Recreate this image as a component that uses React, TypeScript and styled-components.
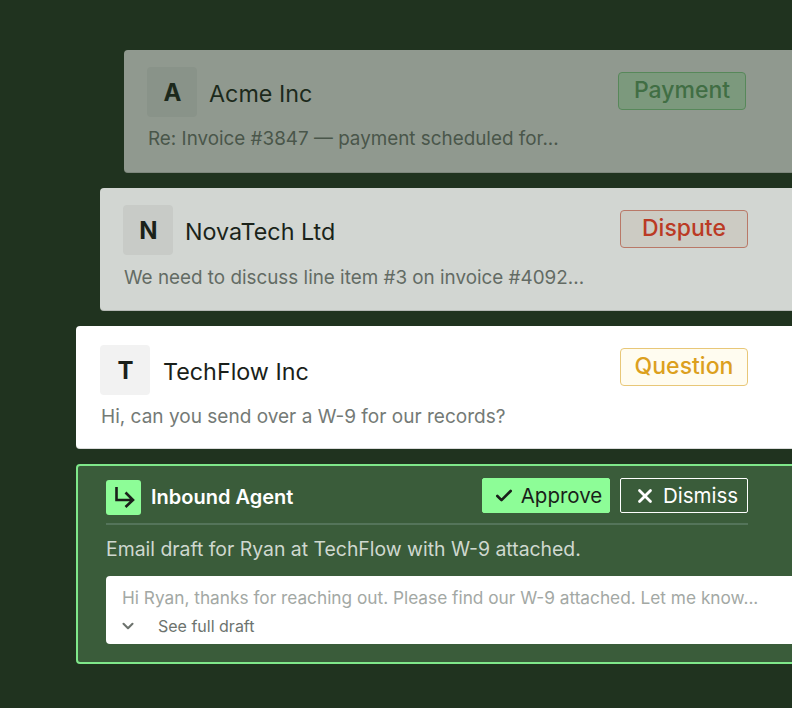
import React from 'react';
import styled, { createGlobalStyle } from 'styled-components';
import { Check, ChevronDown, X } from 'lucide-react';

const GlobalStyle = createGlobalStyle`
	html, body {
		margin: 0;
		background: #20331f;
		font-family: 'Inter', 'Liberation Sans', sans-serif;
	}
`;

const Stage = styled.div`
	width: 792px;
	height: 708px;
	overflow: hidden;
	box-sizing: border-box;
	padding-top: 50px;
	display: flex;
	flex-direction: column;
	gap: 15px;
	background: #20331f;
`;

const Card = styled.div<{ $indent: number; $fade: number; $top: number; $left: number }>`
	box-sizing: border-box;
	flex: none;
	width: 760px;
	height: 123px;
	margin-left: ${(p) => p.$indent}px;
	padding: ${(p) => p.$top}px 0 0 ${(p) => p.$left}px;
	background: #fff;
	border-radius: 4px;
	opacity: ${(p) => p.$fade};
	box-shadow: inset 0 -1px 0 rgba(0, 0, 0, 0.14);
`;

const CardHeader = styled.div<{ $width: number }>`
	display: flex;
	align-items: flex-start;
	width: ${(p) => p.$width}px;
`;

const Avatar = styled.div`
	box-sizing: border-box;
	flex: none;
	width: 50px;
	height: 50px;
	padding: 1px 0 0 1px;
	display: flex;
	align-items: center;
	justify-content: center;
	border-radius: 4px;
	background: #f2f2f2;
	color: #1a1f1a;
	font-size: 24px;
	font-weight: 700;
`;

const Company = styled.div<{ $gap: number }>`
	flex: 1;
	margin-left: ${(p) => p.$gap}px;
	line-height: 53px;
	font-size: 23.3px;
	color: #1a1f1a;
`;

const Tag = styled.div<{ $bg: string; $line: string; $ink: string; $offset: number }>`
	box-sizing: border-box;
	width: 128px;
	height: 38px;
	margin-top: ${(p) => p.$offset}px;
	padding-bottom: 2px;
	display: flex;
	align-items: center;
	justify-content: center;
	border: 1px solid ${(p) => p.$line};
	border-radius: 4px;
	background: ${(p) => p.$bg};
	color: ${(p) => p.$ink};
	font-size: 23px;
	font-weight: 500;
`;

const Message = styled.div<{ $gap: number; $size: number }>`
	margin: ${(p) => p.$gap}px 0 0 1px;
	line-height: 24px;
	font-size: ${(p) => p.$size}px;
	color: #747a76;
	white-space: nowrap;
`;

const AgentCard = styled.div`
	box-sizing: border-box;
	flex: none;
	width: 760px;
	height: 200px;
	margin-left: 76px;
	padding: 12px 0 0 28px;
	background: #3a5c3a;
	border: 2px solid #7fe88a;
	border-radius: 4px;
`;

const AgentHeader = styled.div`
	box-sizing: border-box;
	display: flex;
	align-items: center;
	width: 642px;
	height: 47px;
	padding-bottom: 10px;
	border-bottom: 2px solid #54745a;
`;

const AgentIcon = styled.div`
	flex: none;
	width: 35px;
	height: 35px;
	margin-top: 4px;
	display: flex;
	align-items: center;
	justify-content: center;
	border-radius: 3px;
	background: #8dfd97;
`;

const AgentName = styled.div`
	flex: 1;
	margin: 2px 0 0 10px;
	font-size: 20px;
	font-weight: 600;
	color: #fff;
`;

const ActionButton = styled.button<{ $primary?: boolean }>`
	box-sizing: border-box;
	width: 128px;
	height: 35px;
	margin-left: 10px;
	padding: 0 0 0 4px;
	display: flex;
	align-items: center;
	justify-content: center;
	gap: 7px;
	border: 1px solid ${(p) => (p.$primary ? '#8dfd97' : '#fff')};
	border-radius: 2px;
	background: ${(p) => (p.$primary ? '#8dfd97' : 'transparent')};
	color: ${(p) => (p.$primary ? '#1a1f1a' : '#fff')};
	font-family: inherit;
	font-size: 20.5px;
`;

const AgentNote = styled.div`
	margin-top: 12px;
	line-height: 24px;
	font-size: 19.4px;
	color: #cfd8cf;
	white-space: nowrap;
`;

const Draft = styled.div`
	box-sizing: border-box;
	margin-top: 15px;
	width: 720px;
	height: 68px;
	padding: 11px 16px;
	background: #fff;
	border-radius: 4px;
`;

const DraftText = styled.div`
	line-height: 22px;
	font-size: 17.25px;
	color: #a3a8a4;
	white-space: nowrap;
`;

const DraftToggle = styled.div`
	display: flex;
	align-items: center;
	height: 20px;
	margin-top: 7px;
	font-size: 16px;
	color: #6d736e;
`;

const DraftChevron = styled(ChevronDown)`
	flex: none;
	margin-left: -3px;
`;

const DraftLabel = styled.span`
	margin-left: 21px;
`;

const clients = [
	{
		letter: 'A',
		name: 'Acme Inc',
		message: 'Re: Invoice #3847 — payment scheduled for...',
		indent: 124,
		fade: 0.5,
		top: 17,
		left: 23,
		headerWidth: 599,
		nameGap: 12,
		messageGap: 7,
		messageSize: 18.85,
		tag: { label: 'Payment', bg: '#d8ffda', line: '#8fdc96', ink: '#62a96a' },
	},
	{
		letter: 'N',
		name: 'NovaTech Ltd',
		message: 'We need to discuss line item #3 on invoice #4092...',
		indent: 100,
		fade: 0.8,
		top: 17,
		left: 23,
		headerWidth: 625,
		nameGap: 12,
		messageGap: 8,
		messageSize: 18.85,
		tag: { label: 'Dispute', bg: '#f7f1ed', line: '#e08a7a', ink: '#e23c26' },
	},
	{
		letter: 'T',
		name: 'TechFlow Inc',
		message: 'Hi, can you send over a W-9 for our records?',
		indent: 76,
		fade: 1,
		top: 19,
		left: 24,
		headerWidth: 648,
		nameGap: 13,
		messageGap: 7,
		messageSize: 19.05,
		tag: { label: 'Question', bg: '#fffcf0', line: '#e8c778', ink: '#dca01e' },
	},
];

const App = () => (
	<>
		<GlobalStyle />
		<Stage>
			{clients.map((client) => (
				<Card
					key={client.letter}
					$indent={client.indent}
					$fade={client.fade}
					$top={client.top}
					$left={client.left}
				>
					<CardHeader $width={client.headerWidth}>
						<Avatar>{client.letter}</Avatar>
						<Company $gap={client.nameGap}>{client.name}</Company>
						<Tag
							$bg={client.tag.bg}
							$line={client.tag.line}
							$ink={client.tag.ink}
							$offset={22 - client.top}
						>
							{client.tag.label}
						</Tag>
					</CardHeader>
					<Message $gap={client.messageGap} $size={client.messageSize}>
						{client.message}
					</Message>
				</Card>
			))}
			<AgentCard>
				<AgentHeader>
					<AgentIcon>
						<svg width="35" height="35" viewBox="0 0 35 35" fill="none">
							<path
								d="M10.5 7V20H27M19.5 12.5L27 20L19.5 27"
								stroke="#1a1f1a"
								strokeWidth="2.6"
							/>
						</svg>
					</AgentIcon>
					<AgentName>Inbound Agent</AgentName>
					<ActionButton $primary>
						<Check size={20} strokeWidth={3.2} />
						Approve
					</ActionButton>
					<ActionButton>
						<X size={22} strokeWidth={3} />
						Dismiss
					</ActionButton>
				</AgentHeader>
				<AgentNote>Email draft for Ryan at TechFlow with W-9 attached.</AgentNote>
				<Draft>
					<DraftText>Hi Ryan, thanks for reaching out. Please find our W-9 attached. Let me know...</DraftText>
					<DraftToggle>
						<DraftChevron size={18} strokeWidth={2.8} />
						<DraftLabel>See full draft</DraftLabel>
					</DraftToggle>
				</Draft>
			</AgentCard>
		</Stage>
	</>
);

export default App;
